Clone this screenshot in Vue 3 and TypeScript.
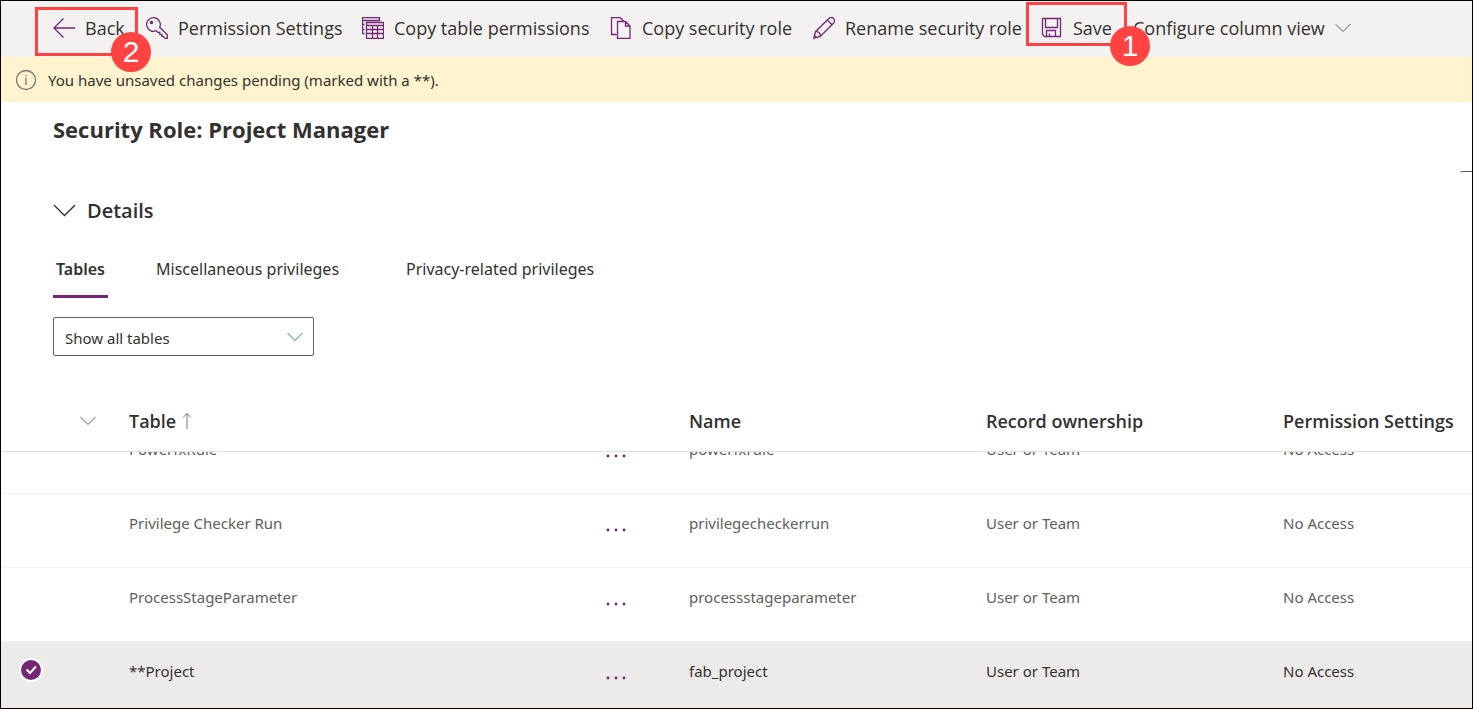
<script setup lang="ts">
import { onMounted, ref } from 'vue'

interface Row {
  label: string
  name: string
  ownership: string
  access: string
  selected: boolean
}

const rows = ref<Row[]>([
  { label: 'PowerfxRule', name: 'powerfxrule', ownership: 'User or Team', access: 'No Access', selected: false },
  { label: 'Privilege Checker Run', name: 'privilegecheckerrun', ownership: 'User or Team', access: 'No Access', selected: false },
  { label: 'ProcessStageParameter', name: 'processstageparameter', ownership: 'User or Team', access: 'No Access', selected: false },
  { label: '**Project', name: 'fab_project', ownership: 'User or Team', access: 'No Access', selected: true },
])

const tabs = ['Tables', 'Miscellaneous privileges', 'Privacy-related privileges']
const activeTab = ref('Tables')
const filter = ref('all')
const scroller = ref<HTMLElement | null>(null)

onMounted(() => {
  if (scroller.value) scroller.value.scrollTop = 32
})
</script>

<template>
  <div class="page">
    <header class="toolbar">
      <div class="command">
        <button type="button">
          <svg class="icon" viewBox="0 0 22 22"><path d="M10.500 1.500 1 11l9.500 9.500M1 11h21" /></svg>
          <span>Back</span>
        </button>
        <span class="frame frame-back"></span>
        <span class="badge badge-back">2</span>
      </div>
      <div class="command">
        <button type="button">
          <svg class="icon" viewBox="0 0 22 22">
            <path d="M7.500.7a6.800 6.800 0 1 0 2.700 13l1.600 1.600h2v2h2v2h1.500l1.700 2h2.300v-3.600l-7.600-7.400A6.800 6.800 0 0 0 7.500.7z" />
            <circle cx="5.500" cy="5.500" r="1" class="solid" />
          </svg>
          <span>Permission Settings</span>
        </button>
      </div>
      <div class="command">
        <button type="button">
          <svg class="icon" viewBox="0 0 22 22">
            <path d="M2.500 16.500h-2v-16h17v3h-17M.5 7.500h2M.5 12.500h2M4.500 5.500h17v16h-17zM4.500 8.500h17M4.500 12.500h17M4.500 16.500h17M10.500 8.500v13M15.500 8.500v13" />
          </svg>
          <span>Copy table permissions</span>
        </button>
      </div>
      <div class="command">
        <button type="button">
          <svg class="icon" viewBox="0 0 22 22">
            <path d="M6.500 17.500h-5v-17h8.500l3.500 3.500M7.500 4.500h8l4.500 4.500v12.500H7.500zM15.500 4.500V9H20" />
          </svg>
          <span>Copy security role</span>
        </button>
      </div>
      <div class="command">
        <button type="button">
          <svg class="icon" viewBox="0 0 22 22">
            <path d="M.8 21.200l1.700-6.500L15.800 1.500a2.700 2.700 0 0 1 4.700 4.700L7.300 19.500zM2.500 14.700a4 4 0 0 1 4.800 4.800M14.300 3l4.700 4.700M1.500 18.500l2 2" />
          </svg>
          <span>Rename security role</span>
        </button>
      </div>
      <div class="command">
        <button type="button">
          <svg class="icon" viewBox="0 0 22 22">
            <path d="M1.500 1.500h18v18H3.500l-2-2zM4.500 1.500v9h12v-9M5.500 19.500v-6h9v6M8.500 19.500v-3" />
          </svg>
          <span>Save</span>
        </button>
        <span class="frame frame-save"></span>
        <span class="badge badge-save">1</span>
      </div>
      <div class="command">
        <button type="button">
          <span>Configure column view</span>
          <svg class="chevron" viewBox="0 0 16 16"><path d="M.5 4 8 11.500 15.500 4" /></svg>
        </button>
      </div>
    </header>

    <div class="notice" role="status">
      <svg class="info" viewBox="0 0 22 22"><circle cx="11" cy="11" r="9.500" /><path d="M11 9v7M11 6v1.500" /></svg>
      <span>You have unsaved changes pending (marked with a **).</span>
    </div>

    <main class="content">
      <h1>Security Role: Project Manager</h1>
      <span class="edge"></span>
      <button type="button" class="details" aria-expanded="true">
        <svg class="details-chevron" viewBox="0 0 22 22"><path d="M1 5 11.500 15.500 22 5" /></svg>
        <span>Details</span>
      </button>

      <div class="tabs" role="tablist">
        <button
          v-for="tab in tabs"
          :key="tab"
          type="button"
          role="tab"
          :aria-selected="tab === activeTab"
          :class="{ active: tab === activeTab }"
          @click="activeTab = tab"
        >
          {{ tab }}
        </button>
      </div>

      <div class="filter">
        <select v-model="filter" aria-label="Table filter">
          <option value="all">Show all tables</option>
        </select>
        <svg class="chevron" viewBox="0 0 16 16"><path d="M.5 4 8 11.500 15.500 4" /></svg>
      </div>
    </main>

    <div ref="scroller" class="scroller">
      <table>
        <colgroup>
          <col class="c-check" /><col class="c-group" /><col /><col class="c-more" />
          <col class="c-data" /><col class="c-data" /><col class="c-last" />
        </colgroup>
        <thead>
          <tr>
            <th></th>
            <th><svg class="chevron" viewBox="0 0 16 16"><path d="M.5 4 8 11.500 15.500 4" /></svg></th>
            <th>
              <span class="sorted">Table
                <svg class="sort" viewBox="0 0 10 18"><path d="M5 17V1.500M1 5.500l4-4 4 4" /></svg>
              </span>
            </th>
            <th></th>
            <th>Name</th>
            <th>Record ownership</th>
            <th>Permission Settings</th>
          </tr>
        </thead>
        <tbody>
          <tr v-for="row in rows" :key="row.name" :class="{ selected: row.selected }">
            <td>
              <label v-if="row.selected" class="check">
                <input v-model="row.selected" type="checkbox" :aria-label="row.label" />
                <svg viewBox="0 0 24 24"><path d="M7.500 11.500l3.500 3.500 6-6.500" /></svg>
              </label>
            </td>
            <td></td>
            <td>{{ row.label }}</td>
            <td>
              <button type="button" class="more" :aria-label="'More actions for ' + row.label">
                <svg viewBox="0 0 22 4"><circle cx="3" cy="2" r="1.400" /><circle cx="11" cy="2" r="1.400" /><circle cx="19" cy="2" r="1.400" /></svg>
              </button>
            </td>
            <td>{{ row.name }}</td>
            <td>{{ row.ownership }}</td>
            <td>{{ row.access }}</td>
          </tr>
        </tbody>
      </table>
    </div>
  </div>
</template>

<style>
body {
  margin: 0;
}
</style>

<style scoped>
.page {
  box-sizing: border-box;
  display: flex;
  flex-direction: column;
  height: 100vh;
  border: 1px solid #000;
  background: #fff;
  color: #323130;
  font-family: "Noto Sans", "Open Sans", sans-serif;
  font-size: 15px;
  overflow: hidden;
}

button {
  padding: 0;
  border: 0;
  background: none;
  color: inherit;
  font: inherit;
  white-space: nowrap;
  cursor: pointer;
}

svg {
  display: block;
  flex: none;
  fill: none;
  stroke: currentColor;
}

.toolbar {
  display: grid;
  grid-template-columns: 93px 216px 248px 203px 228px 92px auto;
  height: 56px;
  padding-left: 52px;
  background: #f3f2f1;
  font-family: "Open Sans", "Noto Sans", sans-serif;
  font-size: 18px;
}

.command {
  position: relative;
  display: flex;
}

.command button {
  display: flex;
  align-items: center;
  gap: 10px;
  padding-bottom: 2px;
}

.icon {
  width: 22px;
  height: 22px;
  color: #742774;
  stroke-width: 1.300;
}

.solid {
  fill: currentColor;
}

.chevron {
  width: 16px;
  height: 16px;
  color: #605e5c;
}

.frame {
  position: absolute;
  box-sizing: border-box;
  border: 3px solid #ff4343;
  pointer-events: none;
}

.frame-back {
  top: 6px;
  left: -18px;
  width: 103px;
  height: 49px;
}

.frame-save {
  top: 1px;
  left: -15px;
  width: 101px;
  height: 44px;
}

.badge {
  position: absolute;
  z-index: 2;
  width: 40px;
  height: 40px;
  border-radius: 50%;
  background: #ff4343;
  color: #fff;
  font-family: "Liberation Sans", sans-serif;
  font-size: 30px;
  line-height: 40px;
  text-align: center;
}

.badge-back {
  top: 31px;
  left: 58px;
}

.badge-save {
  top: 25px;
  left: 69px;
}

.notice {
  display: flex;
  align-items: center;
  gap: 11px;
  height: 45px;
  padding-left: 14px;
  background: #fff4ce;
}

.info {
  width: 22px;
  height: 22px;
  color: #797775;
  stroke-width: 1.300;
}

.content {
  position: relative;
  display: flex;
  flex-direction: column;
  align-items: flex-start;
  padding: 12px 52px 0;
}

h1 {
  margin: 0;
  font-family: "Open Sans", "Noto Sans", sans-serif;
  font-size: 22px;
  font-weight: 700;
  line-height: 30px;
}

.edge {
  position: absolute;
  top: 69px;
  right: 0;
  width: 12px;
  height: 2px;
  border-top: 1px solid #605e5c;
  border-top-left-radius: 2px;
}

.details {
  display: flex;
  align-items: center;
  gap: 12px;
  margin-top: 51px;
  font-family: "Open Sans", "Noto Sans", sans-serif;
  font-size: 20px;
  font-weight: 600;
  line-height: 32px;
}

.details-chevron {
  width: 22px;
  height: 22px;
  stroke-width: 1.300;
}

.tabs {
  display: grid;
  grid-template-columns: 100px 250px auto;
  justify-items: start;
  margin-top: 16px;
}

.tabs button {
  padding: 0 3px;
  border-bottom: 3px solid transparent;
  font-size: 16px;
  line-height: 52px;
}

.tabs .active {
  border-color: #742774;
  font-weight: 600;
}

.filter {
  position: relative;
  width: 261px;
  margin-top: 19px;
}

.filter select {
  box-sizing: border-box;
  width: 100%;
  height: 39px;
  padding: 2px 40px 0 11px;
  border: 1px solid #605e5c;
  border-radius: 2px;
  background: #fff;
  color: inherit;
  font: inherit;
  appearance: none;
}

.filter .chevron {
  position: absolute;
  top: 12px;
  right: 11px;
  color: #2b7a8c;
  pointer-events: none;
}

.scroller {
  flex: 1;
  min-height: 0;
  margin-top: 35px;
  overflow: hidden;
}

table {
  width: 100%;
  border-spacing: 0;
  table-layout: fixed;
}

.c-check {
  width: 79px;
}

.c-group {
  width: 49px;
}

.c-more {
  width: 82px;
}

.c-data {
  width: 297px;
}

.c-last {
  width: 189px;
}

th {
  position: sticky;
  top: 0;
  z-index: 1;
  box-sizing: border-box;
  height: 61px;
  padding: 0;
  border-bottom: 1px solid #e1dfdd;
  background: #fff;
  font-family: "Open Sans", "Noto Sans", sans-serif;
  font-size: 18px;
  font-weight: 600;
  text-align: left;
  white-space: nowrap;
}

.sorted {
  display: flex;
  align-items: center;
  gap: 6px;
}

.sort {
  width: 10px;
  height: 18px;
  color: #797775;
}

td {
  box-sizing: border-box;
  height: 74px;
  padding: 19px 0 0;
  border-bottom: 1px solid #f3f2f1;
  color: #605e5c;
  line-height: 20px;
  vertical-align: top;
  white-space: nowrap;
}

.selected td {
  background: #edebe9;
  color: #323130;
}

.check {
  display: grid;
  width: 24px;
  height: 24px;
  margin-left: 18px;
  margin-top: -3px;
}

.check input,
.check svg {
  grid-area: 1 / 1;
}

.check input {
  box-sizing: border-box;
  width: 24px;
  height: 24px;
  margin: 0;
  border: 2px solid #fff;
  border-radius: 50%;
  background: #742774;
  appearance: none;
}

.check svg {
  width: 24px;
  height: 24px;
  color: #fff;
  stroke-width: 2;
  pointer-events: none;
}

.more {
  display: block;
  padding: 15px 0 4px;
  margin-left: -2px;
  color: #742774;
}

.more svg {
  width: 22px;
  height: 4px;
  fill: currentColor;
  stroke: none;
}
</style>
